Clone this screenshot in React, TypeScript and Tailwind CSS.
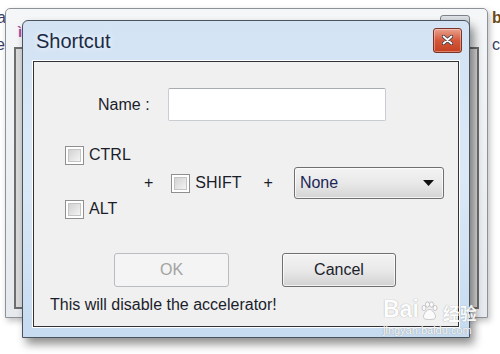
import React from "react";

const Checkbox = () => (
  <span className="inline-flex h-[19px] w-[19px] shrink-0 items-center justify-center border border-[#8e8f8f] bg-white">
    <span className="h-[13px] w-[13px] border border-[#c4c4c4] bg-gradient-to-br from-[#d2d2d2] to-[#f4f4f4]" />
  </span>
);

const Paw = () => (
  <svg width="20" height="20" viewBox="0 0 20 20" className="inline-block">
    <g fill="#ffffff" stroke="#9a9a9a" strokeWidth="0.6" opacity="0.9">
      <ellipse cx="5" cy="7" rx="2" ry="2.6" />
      <ellipse cx="8.5" cy="3.5" rx="2" ry="2.6" />
      <ellipse cx="12.5" cy="3.5" rx="2" ry="2.6" />
      <ellipse cx="16" cy="7" rx="2" ry="2.6" />
      <path d="M10.5 8.5c3 0 6 4.5 6 7.2 0 2.4-2.6 2.8-6 2.8s-6-.4-6-2.8c0-2.7 3-7.2 6-7.2z" />
    </g>
  </svg>
);

const App = () => {
  return (
    <div className="relative h-[354px] w-[500px] overflow-hidden bg-white font-['Liberation_Sans',Arial,sans-serif] text-[16px] text-[#1b1d2b]">
      {/* page text peeking out behind the windows */}
      <span className="absolute left-[-3px] top-[6px] text-[16px] text-[#3a3f6a]">a</span>
      <span className="absolute left-[-4px] top-[33px] text-[16px] text-[#3a3f6a]">e</span>
      <span className="absolute left-[492px] top-[6px] text-[16px] font-bold text-[#6a4a20]">b</span>
      <span className="absolute left-[492px] top-[33px] text-[16px] text-[#3a3f6a]">c</span>

      {/* window behind */}
      <div className="absolute left-[5px] top-[8px] h-[310px] w-[483px] rounded-t-[5px] border border-[#8d9298] bg-gradient-to-b from-[#f4f6f8] to-[#e6e9ed] p-[8px] pt-[38px] shadow-[2px_3px_6px_rgba(0,0,0,0.25)]">
        <span className="absolute left-[12px] top-[12px] text-[15px] font-bold text-[#b04aa0]">ì</span>
        <span className="absolute right-[17px] top-[6px] h-[22px] w-[30px] rounded-[3px] border border-[#7d8288] bg-gradient-to-b from-[#dfe3e8] to-[#a9afb6]" />
        <div className="h-full w-full border-2 border-[#6e6e6e] bg-[#d9d9d9]" />
      </div>

      {/* front dialog */}
      <div className="absolute left-[22px] top-[20px] flex h-[318px] w-[448px] flex-col rounded-t-[6px] border border-[#4b535c] bg-gradient-to-b from-[#d3e3f4] via-[#dbe8f6] to-[#c6dbf0] shadow-[4px_6px_10px_rgba(0,0,0,0.45)]">
        <div className="flex h-[39px] items-center justify-between pl-[13px] pr-[7px]">
          <span className="text-[20px] text-[#1b2a44] [text-shadow:0_0_6px_#ffffff]">Shortcut</span>
          <button className="mt-[-1px] flex h-[25px] w-[29px] items-center justify-center rounded-[3px] border border-[#7b3326] bg-gradient-to-b from-[#e9a08c] via-[#d4573b] to-[#c4401f] shadow-[inset_0_0_0_1px_rgba(255,255,255,0.35)]">
            <svg width="11" height="10" viewBox="0 0 11 10">
              <path d="M1.5 1.5l8 7M9.5 1.5l-8 7" stroke="#3b3f4a" strokeWidth="3.6" strokeLinecap="round" />
              <path d="M1.5 1.5l8 7M9.5 1.5l-8 7" stroke="#ffffff" strokeWidth="1.8" strokeLinecap="round" />
            </svg>
          </button>
        </div>

        <div className="mx-[9px] mb-[9px] flex-1 border border-white">
          <div className="flex h-full flex-col border border-[#2f3338] bg-[#f0f0f0]">
            <div className="mt-[26px] flex items-center pl-[64px]">
              <span className="w-[54px]">Name :</span>
              <span className="ml-[16px] h-[33px] w-[218px] rounded-[2px] border border-[#c9ccd3] border-t-[#a8abb1] bg-white" />
            </div>

            <div className="mt-[22px] flex items-start">
              <div className="flex w-[110px] flex-col gap-[30px] pl-[31px]">
                <label className="flex items-center gap-[5px]">
                  <Checkbox />
                  <span>CTRL</span>
                </label>
                <label className="flex items-center gap-[5px]">
                  <Checkbox />
                  <span>ALT</span>
                </label>
              </div>
              <div className="mt-[24px] flex h-[32px] items-center">
                <span>+</span>
                <label className="ml-[18px] flex items-center gap-[5px]">
                  <Checkbox />
                  <span>SHIFT</span>
                </label>
                <span className="ml-[22px]">+</span>
                <div className="ml-[21px] flex h-[32px] w-[150px] items-center justify-between rounded-[3px] border border-[#707070] bg-gradient-to-b from-[#f3f3f3] via-[#e9e9e9] to-[#d4d4d4] pl-[5px] pr-[9px] shadow-[inset_0_0_0_1px_rgba(255,255,255,0.7)]">
                  <span className="text-[#1c2657]">None</span>
                  <svg width="11" height="6" viewBox="0 0 11 6">
                    <path d="M0 0h11L5.5 6z" fill="#111111" />
                  </svg>
                </div>
              </div>
            </div>

            <div className="mt-[32px] flex pl-[80px]">
              <button className="flex h-[34px] w-[115px] items-center justify-center rounded-[3px] border border-[#b9bcc0] bg-[#f4f4f4] text-[#a3a3a3]">
                OK
              </button>
              <button className="ml-[53px] flex h-[34px] w-[114px] items-center justify-center rounded-[3px] border border-[#707070] bg-gradient-to-b from-[#f3f3f3] via-[#e9e9e9] to-[#d2d2d2] shadow-[inset_0_0_0_1px_rgba(255,255,255,0.7)]">
                Cancel
              </button>
            </div>

            <p className="mt-[6px] pl-[16px]">This will disable the accelerator!</p>
          </div>
        </div>
      </div>

      {/* watermark */}
      <div className="absolute left-[383px] top-[298px] flex flex-col items-start text-white">
        <div className="flex items-end text-[23px] font-bold leading-none opacity-90 [text-shadow:0_0_1px_#8a8a8a]">
          <span>Bai</span>
          <Paw />
          <span className="ml-[4px] font-['Noto_Sans_CJK_SC',sans-serif] text-[17px]">经验</span>
        </div>
        <span className="mt-[4px] text-[11px] leading-none opacity-90 [text-shadow:0_0_1px_#7a7a7a]">jingyan.baidu.com</span>
      </div>
    </div>
  );
};

export default App;
